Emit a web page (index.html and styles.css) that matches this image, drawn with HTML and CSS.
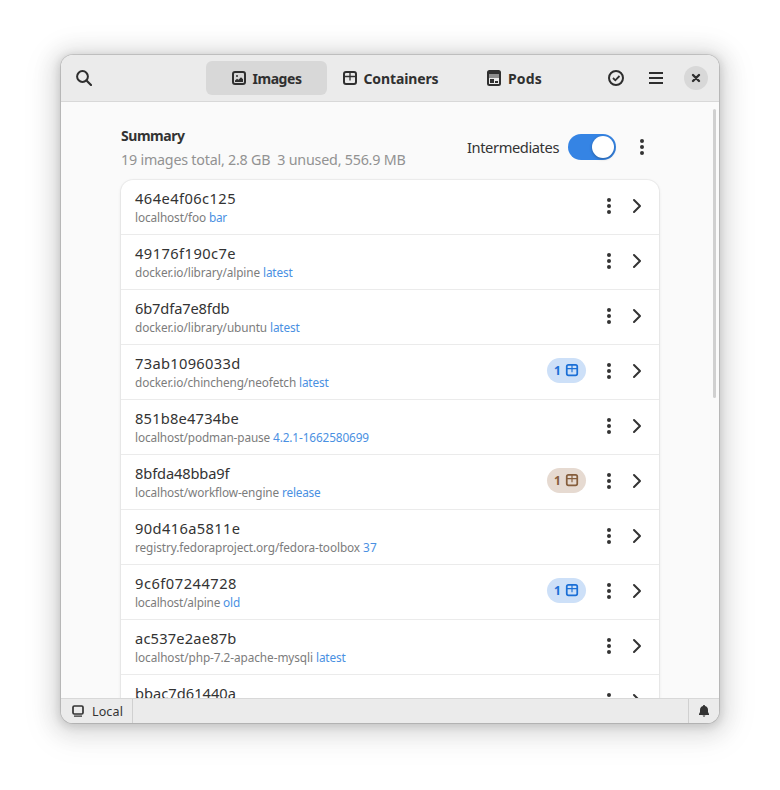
FILE: index.html
```
<!DOCTYPE html>
<html lang="en">
<head>
<meta charset="utf-8">
<title>Images</title>
<link rel="stylesheet" href="styles.css">
</head>
<body>
<svg class="defs" width="0" height="0">
  <symbol id="box" viewBox="0 0 16 16"><rect x="2" y="2" width="12" height="12" rx="2" fill="none" stroke="currentColor" stroke-width="2"/><path d="M2 6.500h12M8 2v8.500" fill="none" stroke="currentColor" stroke-width="1.300"/></symbol>
  <symbol id="dots" viewBox="0 0 16 16"><circle cx="8" cy="2" r="2"/><circle cx="8" cy="8" r="2"/><circle cx="8" cy="14" r="2"/></symbol>
  <symbol id="next" viewBox="0 0 16 16"><path d="M5 2l6 6-6 6" fill="none" stroke="currentColor" stroke-width="2" stroke-linecap="round" stroke-linejoin="round"/></symbol>
</svg>
<div class="window">
  <header class="header">
    <svg class="icon search" viewBox="0 0 16 16"><circle cx="6.500" cy="6.500" r="5.400" fill="none" stroke="currentColor" stroke-width="2"/><path d="M10.500 10.500l4.500 4.500" stroke="currentColor" stroke-width="2.200" stroke-linecap="round"/></svg>
    <nav class="tabs">
      <div class="tab active"><svg class="icon" viewBox="0 0 16 16"><rect x="2" y="2" width="12" height="12" rx="2" fill="none" stroke="currentColor" stroke-width="2"/><circle cx="6" cy="6" r="1"/><path d="M4 12V10.500L6 8.700l1.500 1L10 7.200l2 2V12z"/></svg><span data-width="49">Images</span></div>
      <div class="tab"><svg class="icon"><use href="#box"/></svg><span data-width="75">Containers</span></div>
      <div class="tab"><svg class="icon" viewBox="0 0 16 16"><rect x="2" y="1" width="12" height="14" rx="1.500" fill="none" stroke="currentColor" stroke-width="2"/><path d="M3 2h10v2H3z"/><path d="M3 4h10v4H3z" opacity=".5"/><path d="M4 9h4v4H4zM9 11h3v2H9z"/></svg><span data-width="34">Pods</span></div>
    </nav>
    <div class="controls">
      <svg class="icon" viewBox="0 0 16 16"><circle cx="8" cy="8" r="7" fill="none" stroke="currentColor" stroke-width="2"/><path d="M5 8l2.300 2.300L11.500 6" fill="none" stroke="currentColor" stroke-width="1.800"/></svg>
      <svg class="icon" viewBox="0 0 16 16"><path d="M1 2h14v2H1zM1 7h14v2H1zM1 12h14v2H1z"/></svg>
      <span class="close"><svg class="icon" viewBox="0 0 16 16"><path d="M5 5l6 6M11 5l-6 6" stroke="currentColor" stroke-width="2.400" stroke-linecap="round"/></svg></span>
    </div>
  </header>
  <main class="content">
    <div class="scrollbar"></div>
    <section class="summary">
      <div class="info"><h1><span data-width="63.500">Summary</span></h1><p><span data-width="284.500">19 images total, 2.8 GB&nbsp; 3 unused, 556.9 MB</span></p></div>
      <span class="inter" data-width="92">Intermediates</span>
      <span class="switch"><i></i></span>
      <svg class="icon"><use href="#dots"/></svg>
    </section>
    <div class="list" id="list"></div>
  </main>
  <footer class="status">
    <div class="conn"><svg class="screen" viewBox="0 0 12 12"><rect x="1" y="1" width="10" height="8" rx="1.300" fill="none" stroke="currentColor" stroke-width="1.700"/><path d="M2 10.500h8v1.300H2z"/></svg><span data-width="31">Local</span></div>
    <div class="bell"><svg width="12" height="12" viewBox="0 0 12 12"><path d="M6 0c.8 0 1 .5 1 1 2 .5 3 2 3 4v2l1 2v1H1V9l1-2V5c0-2 1-3.500 3-4 0-.5.2-1 1-1z"/><path d="M4.500 10.500h3L6 12z"/></svg></div>
  </footer>
</div>
<script src="app.js"></script>
</body>
</html>
```
FILE: styles.css
```
* { box-sizing: border-box; }
body { margin: 0; height: 790px; overflow: hidden; background: #fff; padding: 55px 61px; color: #333; font: 14.67px/20px "Noto Sans", sans-serif; }
svg { fill: currentColor; flex: none; display: block; }
.defs { position: absolute; }
.icon { width: 16px; height: 16px; }
[data-width] { display: inline-block; white-space: pre; }
.window { width: 658px; height: 668px; border-radius: 12px; overflow: hidden; display: flex; flex-direction: column; background: #fafafa; box-shadow: 0 0 0 1px rgba(0,0,0,.12), 0 2px 8px 2px rgba(0,0,0,.13), 0 3px 20px 10px rgba(0,0,0,.09), 0 6px 32px 16px rgba(0,0,0,.04); }
.header { height: 47px; flex: none; display: flex; align-items: center; background: #ebebeb; border-bottom: 1px solid #d8d8d8; color: #2e2e2e; }
.search { margin-left: 15px; }
.tabs { display: flex; margin-left: 114px; gap: 3px; }
.tab { width: 121px; height: 34px; border-radius: 6px; display: flex; align-items: center; justify-content: center; gap: 6px; font-size: 14px; font-weight: 700; color: #303030; white-space: nowrap; }
.tab .icon { margin-left: -1px; }
.tab span { padding-top: 1px; }
.active { background: #d8d8d8; }
.controls { display: flex; align-items: center; margin-left: auto; margin-right: 11px; gap: 24px; }
.close { width: 24px; height: 24px; border-radius: 50%; background: #d8d8d8; display: grid; place-items: center; margin-left: -4px; }
.content { flex: 1; min-height: 0; overflow: hidden; position: relative; padding: 0 60px; }
.scrollbar { position: absolute; right: 3px; top: 7px; width: 3px; height: 289px; border-radius: 2px; background: #d0d0d0; }
.summary { height: 78px; display: flex; align-items: center; padding: 12px 9px 0 0; white-space: nowrap; }
.info { flex: 1; padding-top: 2px; }
h1 { margin: 0; font-size: 14px; line-height: 24px; font-weight: 700; }
p { margin: 0; font-size: 14.300px; line-height: 24px; color: #929292; }
.switch { width: 48px; height: 26px; border-radius: 13px; background: #3584e4; padding: 2px; margin: 0 18px 0 9px; display: flex; justify-content: flex-end; }
.switch i { width: 22px; height: 22px; border-radius: 50%; background: #fff; box-shadow: 0 1px 3px rgba(0,0,0,.3); }
.list { background: #fff; border-radius: 12px; box-shadow: 0 0 0 1px rgba(0,0,0,.04), 0 1px 3px 1px rgba(0,0,0,.06); }
.row { height: 55px; display: flex; align-items: center; border-bottom: 1px solid #ebebeb; padding: 0 14px 2px; white-space: nowrap; }
.names { flex: 1; padding-top: 1px; }
.name { line-height: 20px; color: #333; }
.sub { font-size: 11.800px; line-height: 18px; height: 18px; color: #7c7c7c; }
.tag { color: #4a90e2; }
.row .icon + .icon { margin-left: 12px; }
.badge { width: 39px; height: 25px; border-radius: 13px; display: flex; align-items: center; justify-content: center; gap: 4px; margin: 0 15px 1px 0; background: #cde0f8; color: #1b6fd6; font-size: 12px; font-weight: 700; }
.badge svg { width: 14px; height: 14px; margin-top: -1px; }
.badge use { transform: scale(1); }
.idle { background: #e6dad1; color: #865e3c; }
.status { height: 25px; flex: none; display: flex; justify-content: space-between; background: #ebebeb; border-top: 1px solid #d8d8d8; font-size: 12.500px; }
.conn { width: 72px; border-right: 1px solid #d0d0d0; display: flex; align-items: center; padding: 1px 0 0 11px; gap: 8px; }
.screen { width: 12px; height: 12px; margin-top: -1px; }
.bell { width: 31px; border-left: 1px solid #d0d0d0; display: grid; place-items: center; }
```
FILE: app.js
```
// id, repository, tag, container state, then the column widths of the three texts
const images = [
  ["464e4f06c125", "localhost/foo", "bar", "", 101, 74, 18],
  ["49176f190c7e", "docker.io/library/alpine", "latest", "", 101, 128, 29.5],
  ["6b7dfa7e8fdb", "docker.io/library/ubuntu", "latest", "", 94.5, 135, 29.5],
  ["73ab1096033d", "docker.io/chincheng/neofetch", "latest", "used", 105.5, 164, 29.5],
  ["851b8e4734be", "localhost/podman-pause", "4.2.1-1662580699", "", 104, 138, 96],
  ["8bfda48bba9f", "localhost/workflow-engine", "release", "idle", 94.5, 147, 38.5],
  ["90d416a5811e", "registry.fedoraproject.org/fedora-toolbox", "37", "", 105.5, 228, 14],
  ["9c6f07244728", "localhost/alpine", "old", "used", 102, 88, 17],
  ["ac537e2ae87b", "localhost/php-7.2-apache-mysqli", "latest", "", 101.5, 181, 29.5],
  ["bbac7d61440a", "localhost/php", "latest", "", 101, 76, 29.5]
];
document.getElementById("list").innerHTML = images.map(([id, repo, tag, state, a, b, c]) => `
  <div class="row">
    <div class="names"><div class="name"><span data-width="${a}">${id}</span></div><div class="sub"><span data-width="${b}">${repo} </span><span class="tag" data-width="${c}">${tag}</span></div></div>
    ${state ? `<span class="badge ${state}">1<svg viewBox="0 0 16 16"><use href="#box" width="16" height="16"/></svg></span>` : ""}
    <svg class="icon"><use href="#dots"/></svg>
    <svg class="icon"><use href="#next"/></svg>
  </div>`).join("");

document.querySelectorAll("[data-width]").forEach(el => {
  const gap = el.dataset.width - el.getBoundingClientRect().width;
  el.style.letterSpacing = gap / el.textContent.length + "px";
});
```
